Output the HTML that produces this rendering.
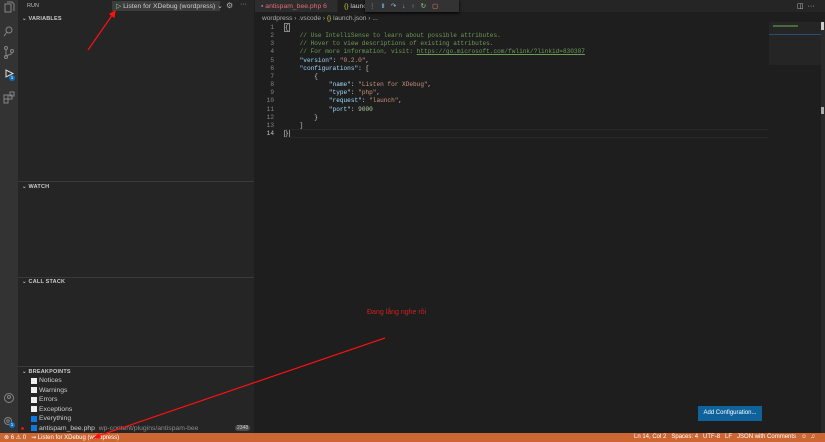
<!DOCTYPE html>
<html><head><meta charset="utf-8"><style>
*{margin:0;padding:0;box-sizing:border-box}
body{width:825px;height:442px;overflow:hidden;background:#1e1e1e;font-family:"Liberation Sans","DejaVu Sans",sans-serif;position:relative;color:#ccc}
.a{position:absolute;white-space:nowrap}
#act{left:0;top:0;width:18px;height:433px;background:#333}
#side{left:18px;top:0;width:236px;height:433px;background:#252526}
.hd{position:absolute;left:22px;font-size:5.5px;font-weight:bold;color:#ccc;letter-spacing:.2px}
.sep{position:absolute;left:18px;width:236px;height:1px;background:#3a3a3a}
.bp{position:absolute;left:31px;font-size:6.8px;color:#ccc;display:flex;align-items:center;white-space:nowrap}
.cb{width:6px;height:6px;background:#f0f0f0;margin-right:2px;display:inline-block}
.cb.on{background:#1177dd}
#tabs{left:255px;top:0;width:570px;height:12px;background:#252526}
.code{position:absolute;left:255px;font-family:"Liberation Mono","DejaVu Sans Mono",monospace;font-size:6.1px;white-space:pre;line-height:8.15px}
.k{color:#9cdcfe}.s{color:#ce9178}.c{color:#6a9955}.n{color:#b5cea8}
#status{left:0;top:433px;width:825px;height:9px;background:#cc6633;color:#fff;font-size:6px}
</style></head><body>
<div id="act" class="a">
<svg width="18" height="433" style="position:absolute;left:0;top:0" fill="none" stroke="#858585" stroke-width="1">
<rect x="5" y="4" width="6" height="8"/><path d="M7 2h5l2 2v7"/>
<circle cx="9" cy="30" r="3"/><path d="M7 32l-3 4"/>
<circle cx="6" cy="48" r="1.5"/><circle cx="6" cy="57" r="1.5"/><circle cx="12" cy="51" r="1.5"/><path d="M6 49.5v6M12 52.5c0 3-6 2-6 4"/>
<path d="M6 70v7l7-3.5z" stroke="#ddd"/>
<rect x="4" y="95" width="4" height="4"/><rect x="8" y="95" width="4" height="4"/><rect x="4" y="99" width="4" height="4"/><rect x="10" y="92" width="4" height="4"/>
<circle cx="9" cy="398" r="4.5"/><circle cx="9" cy="397" r="1.5"/>
<circle cx="8" cy="421" r="3.5"/><circle cx="8" cy="421" r="1.2"/>
</svg>
<div class="a" style="left:9px;top:75px;width:6px;height:6px;border-radius:3px;background:#0e70c0;font-size:4.5px;color:#fff;text-align:center;line-height:6px">1</div>
<div class="a" style="left:9px;top:422px;width:6px;height:6px;border-radius:3px;background:#0e70c0;font-size:4.5px;color:#fff;text-align:center;line-height:6px">1</div>
</div>
<div id="side" class="a"></div>
<div class="a" style="left:27px;top:3px;font-size:5.5px;color:#bbb">RUN</div>
<div class="a" style="left:112px;top:1px;width:108px;height:10px;background:#3c3c3c"></div>
<div class="a" style="left:116px;top:1.5px;font-size:6.8px;color:#ccc"><span style="color:#89d185">▷</span> Listen for XDebug (wordpress) ⌄</div>
<div class="a" style="left:226px;top:1px;font-size:8px;color:#aaa">⚙</div>
<div class="a" style="left:240px;top:1px;font-size:7px;color:#aaa">···</div>
<div class="hd" style="top:16px">⌄ VARIABLES</div>
<div class="sep" style="top:181px"></div>
<div class="hd" style="top:184px">⌄ WATCH</div>
<div class="sep" style="top:277px"></div>
<div class="hd" style="top:279px">⌄ CALL STACK</div>
<div class="sep" style="top:366px"></div>
<div class="hd" style="top:369px">⌄ BREAKPOINTS</div>
<div class="bp" style="top:377px"><span class="cb"></span>Notices</div>
<div class="bp" style="top:386.5px"><span class="cb"></span>Warnings</div>
<div class="bp" style="top:396px"><span class="cb"></span>Errors</div>
<div class="bp" style="top:405.5px"><span class="cb"></span>Exceptions</div>
<div class="bp" style="top:415px"><span class="cb on"></span>Everything</div>
<div class="a" style="left:21px;top:427px;width:3px;height:3px;border-radius:2px;background:#e51400"></div>
<div class="bp" style="top:424.5px"><span class="cb on"></span>antispam_bee.php &nbsp;<span style="color:#8b8b8b">wp-content/plugins/antispam-bee</span></div>
<div class="a" style="left:235px;top:425px;font-size:5px;background:#4d4d4d;color:#ccc;padding:0 2px;border-radius:3px">2348</div>
<div id="tabs" class="a"></div>
<div class="a" style="left:255px;top:0;width:82px;height:12px;background:#2d2d2d"></div>
<div class="a" style="left:261px;top:2.5px;font-size:6.8px;color:#e06c75"><span style="color:#a074c4">▪</span> antispam_bee.php 6</div>
<div class="a" style="left:338px;top:0;width:34px;height:12px;background:#1e1e1e"></div>
<div class="a" style="left:344px;top:2.5px;font-size:6.8px;color:#ccc"><span style="color:#cbcb41">{}</span> launc</div>
<div class="a" style="left:365px;top:0;width:94px;height:12px;background:#333;box-shadow:0 1px 3px #000"></div>
<div class="a" style="left:369px;top:2px;font-size:6.5px;letter-spacing:6px;color:#75beff">⋮<span>Ⅱ</span>↷↓↑<span style="color:#89d185">↻</span><span style="color:#f48771">▢</span></div>
<div class="a" style="left:797px;top:2px;font-size:7px;color:#ccc">◫ &nbsp;···</div>
<div class="a" style="left:262px;top:14.5px;font-size:6.6px;color:#aaa">wordpress › .vscode › <span style="color:#cbcb41">{}</span> launch.json › ...</div>
<div class="code" style="top:24px;color:#858585;text-align:right;width:20px;left:254px">1
2
3
4
5
6
7
8
9
10
11
12
13
<span style="color:#c6c6c6">14</span></div>
<div class="code" style="top:24px;left:285px;color:#d4d4d4"><span style="outline:1px solid #888">{</span>
    <span class="c">// Use IntelliSense to learn about possible attributes.</span>
    <span class="c">// Hover to view descriptions of existing attributes.</span>
    <span class="c">// For more information, visit: <u>https://go.microsoft.com/fwlink/?linkid=830387</u></span>
    <span class="k">"version"</span>: <span class="s">"0.2.0"</span>,
    <span class="k">"configurations"</span>: [
        {
            <span class="k">"name"</span>: <span class="s">"Listen for XDebug"</span>,
            <span class="k">"type"</span>: <span class="s">"php"</span>,
            <span class="k">"request"</span>: <span class="s">"launch"</span>,
            <span class="k">"port"</span>: <span class="n">9000</span>
        }
    ]
<span style="outline:1px solid #888">}</span></div>
<div class="a" style="left:284px;top:129px;width:484px;height:9px;border-top:1px solid #282828;border-bottom:1px solid #282828"></div>
<div class="a" style="left:769px;top:22px;width:52px;height:43px;background:#252526"></div>
<div class="a" style="left:773px;top:25px;width:25px;height:2px;background:#4b6a3a"></div>
<div class="a" style="left:769px;top:34px;width:52px;height:1px;background:#264f78"></div>
<div class="a" style="left:821px;top:22px;width:4px;height:411px;background:#2a2a2a"></div>
<div class="a" style="left:821px;top:22px;width:3px;height:8px;background:#ccc"></div>
<div class="a" style="left:821px;top:107px;width:3px;height:7px;background:#aaa"></div>
<div class="a" style="left:367px;top:309px;font-size:7px;color:#d02020">Đang lắng nghe rồi</div>
<div class="a" style="left:698px;top:406px;width:64px;height:15px;background:#0e639c;color:#fff;font-size:6px;line-height:15px;text-align:center">Add Configuration...</div>
<div id="status" class="a">
<span class="a" style="left:4px;top:1px">⊗ 6 ⚠ 0 &nbsp; ⇝ Listen for XDebug (wordpress)</span>
<span class="a" style="left:634px;top:1px">Ln 14, Col 2 &nbsp; Spaces: 4 &nbsp; UTF-8 &nbsp; LF &nbsp; JSON with Comments &nbsp; ☺ &nbsp;♫</span>
</div>
<svg class="a" style="left:0;top:0" width="825" height="442"><g stroke="#ff1010" stroke-width="1.2" fill="#ff1010">
<line x1="88" y1="50" x2="113" y2="14"/><path d="M115 11l-1 6-4-3z"/>
<line x1="385" y1="338" x2="98" y2="436"/><path d="M94 438l5-4 1 4z"/></g></svg>
</body></html>
